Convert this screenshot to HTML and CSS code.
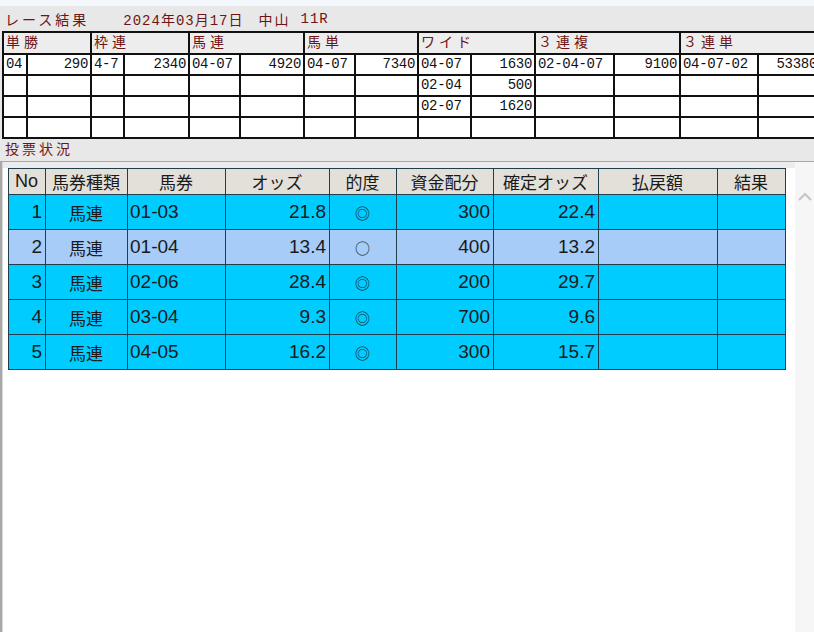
FILE: index.html
```html
<!DOCTYPE html>
<html lang="ja">
<head>
    <meta charset="UTF-8">
    <title>レース結果</title>
    <link rel="stylesheet" href="styles.css">
</head>
<body>
    <div class="window-top"></div>
    <div class="race-title">
        <span class="title-main">レース結果</span>
        <span class="title-date">2024年03月17日</span>
        <span class="title-place">中山</span>
        <span class="title-race">11R</span>
    </div>

    <table class="result-table">
        <colgroup>
            <col style="width:24px"><col style="width:64px">
            <col style="width:33px"><col style="width:65px">
            <col style="width:51px"><col style="width:64px">
            <col style="width:51px"><col style="width:63px">
            <col style="width:53px"><col style="width:64px">
            <col style="width:79px"><col style="width:66px">
            <col style="width:78px"><col style="width:62px">
        </colgroup>
        <thead>
            <tr>
                <th colspan="2">単勝</th>
                <th colspan="2">枠連</th>
                <th colspan="2">馬連</th>
                <th colspan="2">馬単</th>
                <th colspan="2">ワイド</th>
                <th colspan="2">３連複</th>
                <th colspan="2">３連単</th>
            </tr>
        </thead>
        <tbody>
            <tr>
                <td>04</td><td class="num">290</td>
                <td>4-7</td><td class="num">2340</td>
                <td>04-07</td><td class="num">4920</td>
                <td>04-07</td><td class="num">7340</td>
                <td>04-07</td><td class="num">1630</td>
                <td>02-04-07</td><td class="num">9100</td>
                <td>04-07-02</td><td class="num">53380</td>
            </tr>
            <tr>
                <td></td><td></td><td></td><td></td><td></td><td></td><td></td><td></td>
                <td>02-04</td><td class="num">500</td>
                <td></td><td></td><td></td><td></td>
            </tr>
            <tr>
                <td></td><td></td><td></td><td></td><td></td><td></td><td></td><td></td>
                <td>02-07</td><td class="num">1620</td>
                <td></td><td></td><td></td><td></td>
            </tr>
            <tr>
                <td></td><td></td><td></td><td></td><td></td><td></td><td></td><td></td>
                <td></td><td></td><td></td><td></td><td></td><td></td>
            </tr>
        </tbody>
    </table>

    <div class="section-label">投票状況</div>

    <div class="bet-panel">
        <div class="bet-main">
            <table class="bet-table">
                <colgroup>
                    <col style="width:37px"><col style="width:82px">
                    <col style="width:98px"><col style="width:104px">
                    <col style="width:67px"><col style="width:97px">
                    <col style="width:105px"><col style="width:119px">
                    <col style="width:68px">
                </colgroup>
                <thead>
                    <tr>
                        <th class="latin">No</th><th>馬券種類</th><th>馬券</th><th>オッズ</th><th>的度</th>
                        <th>資金配分</th><th>確定オッズ</th><th>払戻額</th><th>結果</th>
                    </tr>
                </thead>
                <tbody>
                    <tr class="row-main">
                        <td class="num">1</td><td class="center">馬連</td><td>01-03</td><td class="num">21.8</td>
                        <td class="center mark">◎</td><td class="num">300</td><td class="num">22.4</td><td></td><td></td>
                    </tr>
                    <tr class="row-alt">
                        <td class="num">2</td><td class="center">馬連</td><td>01-04</td><td class="num">13.4</td>
                        <td class="center mark">○</td><td class="num">400</td><td class="num">13.2</td><td></td><td></td>
                    </tr>
                    <tr class="row-main">
                        <td class="num">3</td><td class="center">馬連</td><td>02-06</td><td class="num">28.4</td>
                        <td class="center mark">◎</td><td class="num">200</td><td class="num">29.7</td><td></td><td></td>
                    </tr>
                    <tr class="row-main">
                        <td class="num">4</td><td class="center">馬連</td><td>03-04</td><td class="num">9.3</td>
                        <td class="center mark">◎</td><td class="num">700</td><td class="num">9.6</td><td></td><td></td>
                    </tr>
                    <tr class="row-main">
                        <td class="num">5</td><td class="center">馬連</td><td>04-05</td><td class="num">16.2</td>
                        <td class="center mark">◎</td><td class="num">300</td><td class="num">15.7</td><td></td><td></td>
                    </tr>
                </tbody>
            </table>
        </div>
        <div class="scroll-bar">
            <svg class="scroll-up" width="14" height="9" viewBox="0 0 14 9">
                <path d="M1 8 L7 2 L13 8" fill="none" stroke="#c4c4c4" stroke-width="2"/>
            </svg>
        </div>
    </div>
</body>
</html>
```

FILE: styles.css
```css
body {
    margin: 0;
    width: 814px;
    height: 632px;
    overflow: hidden;
    display: flex;
    flex-direction: column;
    background-color: #e8e8e8;
    font-family: "Noto Sans CJK JP", sans-serif;
}

.window-top {
    height: 6px;
    flex-shrink: 0;
    background-color: #f3f6fa;
}

/* title line */
.race-title {
    height: 25px;
    flex-shrink: 0;
    display: flex;
    align-items: center;
    padding-left: 5px;
    color: #6e1414;
    font-family: "Liberation Mono", "Noto Sans CJK JP", monospace;
    font-size: 14px;
}

.title-main {
    letter-spacing: 3px;
    margin-right: 34px;
}

.title-date {
    letter-spacing: 1px;
    margin-right: 15px;
}

.title-place {
    letter-spacing: 2px;
    margin-right: 10px;
}

.title-race {
    letter-spacing: 1px;
}

/* payout table */
.result-table {
    table-layout: fixed;
    border-collapse: collapse;
    width: 815px;
    margin-left: 2px;
    flex-shrink: 0;
    font-family: "Liberation Mono", "Noto Sans CJK JP", monospace;
    font-size: 14px;
}

.result-table th,
.result-table td {
    border: 2px solid #111;
    padding: 0 2px;
    height: 19px;
    line-height: 19px;
    white-space: nowrap;
    overflow: hidden;
}

.result-table th {
    height: 20px;
    background-color: #ededed;
    color: #6e1414;
    font-weight: normal;
    text-align: left;
    letter-spacing: 4px;
    font-size: 14px;
}

.result-table td {
    background-color: #fff;
    color: #111;
    letter-spacing: -0.3px;
}

.result-table td.num {
    text-align: right;
}

.section-label {
    height: 22px;
    flex-shrink: 0;
    line-height: 19px;
    padding-left: 5px;
    color: #6e1414;
    font-size: 14px;
    letter-spacing: 3px;
}

/* bet status panel */
.bet-panel {
    display: flex;
    flex: 1;
    border-top: 1px solid #a8a8a8;
    border-left: 2px solid #a8a8a8;
    background-color: #fff;
}

.bet-main {
    flex: 1;
    padding: 6px 0 0 5px;
    border-left: 1px solid #d8d8d8;
    background: linear-gradient(#ececec, #ececec) no-repeat;
    background-size: 100% 6px;
}

.bet-table {
    table-layout: fixed;
    border-collapse: collapse;
    width: 777px;
    font-family: "Liberation Sans", "Noto Sans CJK JP", sans-serif;
    font-size: 19px;
    color: #1a1a1a;
}

.bet-table th,
.bet-table td {
    border: 1px solid #1f3f4f;
    padding: 0 3px 0 2px;
    white-space: nowrap;
}

.bet-table th {
    height: 25px;
    background-color: #e3e0d9;
    font-family: "Noto Sans CJK JP", sans-serif;
    font-weight: normal;
    font-size: 17px;
    line-height: 25px;
    text-align: center;
}

.bet-table th.latin {
    font-family: "Liberation Sans", sans-serif;
    font-size: 18px;
}

.bet-table td {
    height: 34px;
}

.bet-table .num {
    text-align: right;
}

.bet-table .center {
    text-align: center;
    font-family: "Noto Sans CJK JP", sans-serif;
    font-size: 17px;
}

.bet-table .mark {
    font-size: 15px;
}

.row-main td {
    background-color: #00ccff;
}

.row-alt td {
    background-color: #a6ccf7;
}

.scroll-bar {
    width: 19px;
    background-color: #f6f6f6;
    padding-top: 30px;
    display: flex;
    justify-content: center;
    align-items: flex-start;
}
```
